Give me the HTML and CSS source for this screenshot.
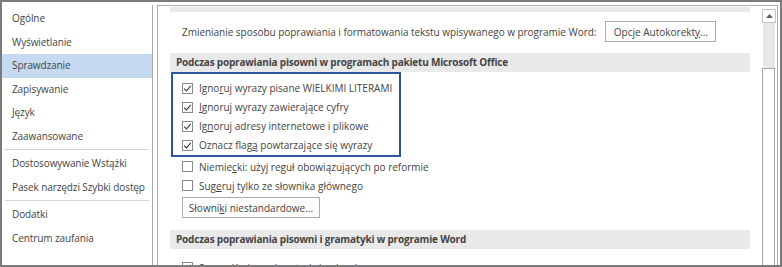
FILE: index.html
```html
<!DOCTYPE html>
<html lang="pl">
<head>
<meta charset="utf-8">
<title>Opcje programu Word - Sprawdzanie</title>
<link rel="stylesheet" href="styles.css">
</head>
<body>
<div class="window">
  <nav class="sidebar">
    <div class="item">Ogólne</div>
    <div class="item">Wyświetlanie</div>
    <div class="item active">Sprawdzanie</div>
    <div class="item">Zapisywanie</div>
    <div class="item">Język</div>
    <div class="item">Zaawansowane</div>
    <div class="sep"></div>
    <div class="item">Dostosowywanie Wstążki</div>
    <div class="item">Pasek narzędzi Szybki dostęp</div>
    <div class="sep"></div>
    <div class="item">Dodatki</div>
    <div class="item">Centrum zaufania</div>
  </nav>
  <div class="panel">
    <div class="content">
      <div class="bar-top"></div>
      <div class="autocorrect">
        <span class="label">Zmienianie sposobu poprawiania i formatowania tekstu wpisywanego w programie Word:</span>
        <span class="btn btn-auto">Opcje Autokorekt<u>y</u>...</span>
      </div>
      <div class="section-head">Podczas poprawiania pisowni w programach pakietu Microsoft Office</div>
      <div class="group">
        <div class="check"><span class="box"><svg viewBox="0 0 11 11" width="11" height="11"><rect x="0.5" y="0.5" width="10" height="10" fill="#fff" stroke="#8a8a8a"/><polyline points="2.2,5.6 4.4,7.9 8.8,2.8" fill="none" stroke="#3c3c3c" stroke-width="1.1"/></svg></span><span>Igno<u>r</u>uj wyrazy pisane WIELKIMI LITERAMI</span></div>
        <div class="check"><span class="box"><svg viewBox="0 0 11 11" width="11" height="11"><rect x="0.5" y="0.5" width="10" height="10" fill="#fff" stroke="#8a8a8a"/><polyline points="2.2,5.6 4.4,7.9 8.8,2.8" fill="none" stroke="#3c3c3c" stroke-width="1.1"/></svg></span><span><u>I</u>gnoruj wyrazy zawierające cyfry</span></div>
        <div class="check"><span class="box"><svg viewBox="0 0 11 11" width="11" height="11"><rect x="0.5" y="0.5" width="10" height="10" fill="#fff" stroke="#8a8a8a"/><polyline points="2.2,5.6 4.4,7.9 8.8,2.8" fill="none" stroke="#3c3c3c" stroke-width="1.1"/></svg></span><span>Ig<u>n</u>oruj adresy internetowe i plikowe</span></div>
        <div class="check"><span class="box"><svg viewBox="0 0 11 11" width="11" height="11"><rect x="0.5" y="0.5" width="10" height="10" fill="#fff" stroke="#8a8a8a"/><polyline points="2.2,5.6 4.4,7.9 8.8,2.8" fill="none" stroke="#3c3c3c" stroke-width="1.1"/></svg></span><span>Oznacz flag<u>ą</u> powtarzające się wyrazy</span></div>
      </div>
      <div class="check plain"><span class="box"><svg viewBox="0 0 11 11" width="11" height="11"><rect x="0.5" y="0.5" width="10" height="10" fill="#fff" stroke="#8a8a8a"/></svg></span><span>Niemie<u>c</u>ki: użyj reguł obowiązujących po reformie</span></div>
      <div class="check plain"><span class="box"><svg viewBox="0 0 11 11" width="11" height="11"><rect x="0.5" y="0.5" width="10" height="10" fill="#fff" stroke="#8a8a8a"/></svg></span><span>Sug<u>e</u>ruj tylko ze słownika głównego</span></div>
      <div class="btn-row"><span class="btn btn-dict">Słowni<u>k</u>i niestandardowe...</span></div>
      <div class="section-head second">Podczas poprawiania pisowni i gramatyki w programie Word</div>
      <div class="check plain last"><span class="box"><svg viewBox="0 0 11 11" width="11" height="11"><rect x="0.5" y="0.5" width="10" height="10" fill="#fff" stroke="#8a8a8a"/><polyline points="2.2,5.6 4.4,7.9 8.8,2.8" fill="none" stroke="#3c3c3c" stroke-width="1.1"/></svg></span><span>Sprawdź pisownię w trakcie pisania</span></div>
    </div>
    <div class="scrollbar">
      <div class="sb-up"><svg viewBox="0 0 7 4" width="7" height="4"><polygon points="0,4 3.5,0 7,4" fill="#5f5f5f"/></svg></div>
      <div class="sb-track"></div>
      <div class="sb-thumb"></div>
    </div>
  </div>
</div>
</body>
</html>
```
FILE: styles.css
```css
html, body {
  margin: 0;
  padding: 0;
  background: #fff;
}

body {
  font-family: "Open Sans", "Noto Sans", "DejaVu Sans", sans-serif;
  font-size: 10px;
  color: #444;
}

.window {
  width: 782px;
  height: 267px;
  box-sizing: border-box;
  border: 2px solid #7b7b7b;
  padding: 3px 2px 0 0;
  display: flex;
  gap: 4px;
  overflow: hidden;
  background: #fff;
}

.sidebar {
  width: 151px;
  flex: none;
  box-sizing: border-box;
  border-right: 1px solid #ababab;
  padding-top: 2px;
  display: flex;
  flex-direction: column;
}

.item {
  height: 23.5px;
  line-height: 23.5px;
  padding-left: 10px;
  white-space: nowrap;
  font-size: 10px;
  letter-spacing: -0.1px;
  color: #444;
}

.item.active {
  background: #c5d9f1;
}

.sep {
  height: 1px;
  background: #d6d6d6;
  margin: 1px 3px 2px 3px;
}

.panel {
  flex: 1;
  display: flex;
  border: 1px solid #ababab;
  border-bottom: none;
  min-width: 0;
}

.content {
  flex: 1;
  min-width: 0;
  padding: 0 11px 0 12px;
  display: flex;
  flex-direction: column;
}

.bar-top {
  height: 5px;
  margin-top: 1px;
  background: #e9e9e9;
  flex: none;
}

.autocorrect {
  margin-top: 9px;
  height: 21px;
  display: flex;
  align-items: center;
  padding-left: 12px;
  gap: 9px;
  flex: none;
}

.label {
  white-space: nowrap;
  letter-spacing: -0.03px;
}

.btn {
  box-sizing: border-box;
  height: 21px;
  border: 1px solid #ababab;
  background: #fdfdfd;
  display: inline-flex;
  align-items: center;
  justify-content: center;
  white-space: nowrap;
  color: #444;
  flex: none;
}

.btn-auto {
  width: 111px;
}

.btn-dict {
  width: 138px;
}

.btn-row {
  margin-top: 2px;
  padding-left: 12px;
  display: flex;
  flex: none;
}

.section-head {
  margin-top: 11px;
  height: 19px;
  line-height: 19px;
  background: #e9e9e9;
  font-weight: bold;
  letter-spacing: -0.2px;
  padding-left: 6px;
  white-space: nowrap;
  flex: none;
}

.section-head.second {
  margin-top: 12px;
}

.group {
  margin-left: 1px;
  width: 230px;
  height: 85px;
  box-sizing: border-box;
  border: 2px solid #2b579a;
  padding: 4.5px 0 0 9px;
  flex: none;
}

.check {
  height: 19px;
  display: flex;
  align-items: center;
  gap: 6px;
  white-space: nowrap;
  flex: none;
}

.check.plain {
  padding-left: 12px;
}

.check.last {
  margin-top: 9px;
}

.box {
  width: 11px;
  height: 11px;
  display: block;
  flex: none;
}

.box svg {
  display: block;
}

u {
  text-decoration: underline;
  text-underline-offset: 1px;
}

.scrollbar {
  width: 16px;
  flex: none;
  padding-top: 3px;
  display: flex;
  flex-direction: column;
}

.sb-up {
  margin-left: 1px;
  width: 14px;
  height: 14px;
  box-sizing: border-box;
  border: 1px solid #c3c3c3;
  background: #fff;
  display: flex;
  align-items: center;
  justify-content: center;
  flex: none;
}

.sb-track {
  margin-left: 2px;
  width: 12px;
  height: 45px;
  background: #e8e8e8;
  flex: none;
}

.sb-thumb {
  margin-left: 1px;
  width: 13px;
  flex: 1;
  box-sizing: border-box;
  border: 1px solid #a6a6a6;
  border-bottom: none;
  background: #fff;
}
```
